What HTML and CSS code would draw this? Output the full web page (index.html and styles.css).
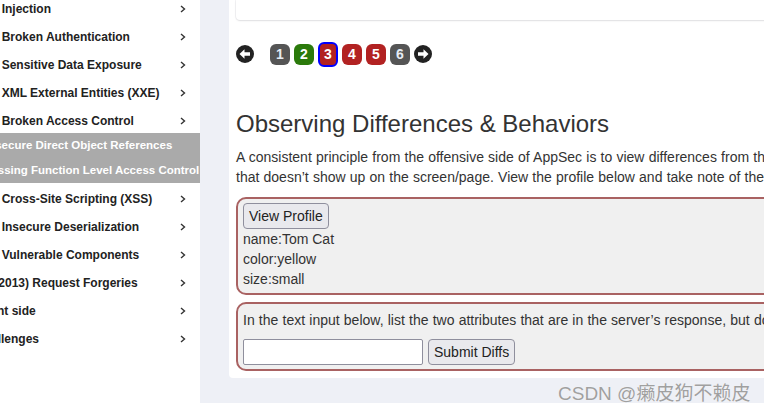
FILE: index.html
```html
<!DOCTYPE html>
<html lang="en">
<head>
<meta charset="utf-8">
<title>Observing Differences &amp; Behaviors</title>
<link rel="stylesheet" href="styles.css">
</head>
<body>
<div class="app">
  <nav class="sidebar">
    <ul class="menu">
      <li class="item"><span>(A1) Injection</span><svg class="chev" width="6" height="8" viewBox="0 0 6 8"><path d="M1 1 L4.5 4 L1 7" /></svg></li>
      <li class="item"><span>(A2) Broken Authentication</span><svg class="chev" width="6" height="8" viewBox="0 0 6 8"><path d="M1 1 L4.5 4 L1 7" /></svg></li>
      <li class="item"><span>(A3) Sensitive Data Exposure</span><svg class="chev" width="6" height="8" viewBox="0 0 6 8"><path d="M1 1 L4.5 4 L1 7" /></svg></li>
      <li class="item"><span>(A4) XML External Entities (XXE)</span><svg class="chev" width="6" height="8" viewBox="0 0 6 8"><path d="M1 1 L4.5 4 L1 7" /></svg></li>
      <li class="item"><span>(A5) Broken Access Control</span><svg class="chev" width="6" height="8" viewBox="0 0 6 8"><path d="M1 1 L4.5 4 L1 7" /></svg></li>
      <li class="sub">
        <span class="sub-item">Insecure Direct Object References</span>
        <span class="sub-item">Missing Function Level Access Control</span>
      </li>
      <li class="item"><span>(A7) Cross-Site Scripting (XSS)</span><svg class="chev" width="6" height="8" viewBox="0 0 6 8"><path d="M1 1 L4.5 4 L1 7" /></svg></li>
      <li class="item"><span>(A8) Insecure Deserialization</span><svg class="chev" width="6" height="8" viewBox="0 0 6 8"><path d="M1 1 L4.5 4 L1 7" /></svg></li>
      <li class="item"><span>(A9) Vulnerable Components</span><svg class="chev" width="6" height="8" viewBox="0 0 6 8"><path d="M1 1 L4.5 4 L1 7" /></svg></li>
      <li class="item"><span>(A8:2013) Request Forgeries</span><svg class="chev" width="6" height="8" viewBox="0 0 6 8"><path d="M1 1 L4.5 4 L1 7" /></svg></li>
      <li class="item"><span>Client side</span><svg class="chev" width="6" height="8" viewBox="0 0 6 8"><path d="M1 1 L4.5 4 L1 7" /></svg></li>
      <li class="item"><span>Challenges</span><svg class="chev" width="6" height="8" viewBox="0 0 6 8"><path d="M1 1 L4.5 4 L1 7" /></svg></li>
    </ul>
  </nav>
  <main class="main">
    <div class="panel">
      <div class="prev-card"></div>
      <div class="pager">
        <svg class="arrow arrow-prev" width="18" height="18" viewBox="0 0 18 18"><circle cx="9" cy="9" r="9" fill="#222"/><path d="M3.5 9 L8.5 4.2 L8.5 7.2 L14 7.2 L14 10.8 L8.5 10.8 L8.5 13.8 Z" fill="#fff"/></svg>
        <span class="page grey">1</span>
        <span class="page green">2</span>
        <span class="page red active">3</span>
        <span class="page red">4</span>
        <span class="page red">5</span>
        <span class="page grey">6</span>
        <svg class="arrow" width="18" height="18" viewBox="0 0 18 18"><circle cx="9" cy="9" r="9" fill="#222"/><path d="M14.5 9 L9.5 4.2 L9.5 7.2 L4 7.2 L4 10.8 L9.5 10.8 L9.5 13.8 Z" fill="#fff"/></svg>
      </div>
      <h2 class="title">Observing Differences &amp; Behaviors</h2>
      <p class="intro">A consistent principle from the offensive side of AppSec is to view differences from the raw response<br>that doesn’t show up on the screen/page. View the profile below and take note of the differences.</p>
      <div class="box">
        <button class="btn" type="button">View Profile</button>
        <div>name:Tom Cat</div>
        <div>color:yellow</div>
        <div>size:small</div>
      </div>
      <div class="box box-form">
        <div class="nowrap">In the text input below, list the two attributes that are in the server’s response, but don’t show in the profile.</div>
        <div class="form-row">
          <input class="field" type="text">
          <button class="btn" type="button">Submit Diffs</button>
        </div>
      </div>
    </div>
  </main>
</div>
<div class="watermark">CSDN @癞皮狗不赖皮</div>
</body>
</html>
```
FILE: styles.css
```css
html, body {
  margin: 0;
  padding: 0;
}

body {
  position: relative;
  width: 764px;
  height: 413px;
  overflow: hidden;
  background: #fff;
  font-family: "Liberation Sans", Arial, sans-serif;
  color: #333;
}

.app {
  display: flex;
  height: 403px;
  background: #eef0f6;
}

/* ---------- sidebar ---------- */
.sidebar {
  flex: 0 0 200px;
  background: #fff;
  overflow: hidden;
}

.menu {
  list-style: none;
  margin: -5px 0 0 -25px;
  padding: 0;
  width: 225px;
}

.item {
  display: flex;
  align-items: center;
  justify-content: space-between;
  height: 28px;
  padding-right: 14px;
  font-size: 12px;
  font-weight: bold;
  color: #222;
  white-space: nowrap;
}

.chev path {
  fill: none;
  stroke: #333;
  stroke-width: 1.4;
}

.sub {
  margin: -2px 0 2px;
  background: #aaa;
}

.sub-item {
  display: block;
  height: 25px;
  line-height: 25px;
  padding-left: 10px;
  font-size: 11.5px;
  font-weight: bold;
  color: #fff;
  white-space: nowrap;
}

/* ---------- main ---------- */
.main {
  flex: 0 0 800px;
  padding-left: 29px;
}

.panel {
  box-sizing: border-box;
  height: 378px;
  padding-left: 7px;
  background: #fff;
  border-radius: 0 0 0 4px;
  overflow: hidden;
}

.prev-card {
  height: 20px;
  background: #fff;
  border-radius: 0 0 4px 4px;
  box-shadow: 0 1px 2px rgba(0, 0, 0, 0.09), 0 0 0 1px #f4f4f6;
}

.pager {
  display: flex;
  align-items: center;
  gap: 4px;
  height: 24px;
  margin-top: 22px;
}

.arrow-prev {
  margin-right: 12px;
}

.page {
  box-sizing: border-box;
  display: flex;
  align-items: center;
  justify-content: center;
  width: 20px;
  height: 21px;
  border-radius: 6px;
  font-size: 14px;
  font-weight: bold;
  color: #fff;
}

.grey { background: #555; color: #e6ecf4; }
.green { background: #2b7a0b; }
.red { background: #b22222; }

.page.active {
  height: 25px;
  border: 2px solid #0000ff;
}

.title {
  margin: 44px 0 0;
  font-size: 24px;
  line-height: 28px;
  font-weight: normal;
  color: #333;
}

.intro {
  margin: 9px 0 0;
  font-size: 14px;
  line-height: 20px;
  word-spacing: 0.3px;
  white-space: nowrap;
}

.box {
  margin-top: 10px;
  padding: 4px 5px;
  border: 2px solid #a96262;
  border-radius: 10px;
  background: #f0f0f0;
  font-size: 14px;
  line-height: 20px;
  color: #333;
}

.box-form {
  margin-top: 7px;
  padding-top: 6px;
}

.nowrap {
  white-space: nowrap;
  word-spacing: 0.3px;
}

.btn {
  display: block;
  height: 26px;
  padding: 0 5px;
  font-family: "Liberation Sans", Arial, sans-serif;
  font-size: 14px;
  color: #222;
  background: #e9e9ed;
  border: 1px solid #8f8f9d;
  border-radius: 4px;
}

.form-row {
  display: flex;
  gap: 5px;
  margin-top: 9px;
}

.field {
  box-sizing: border-box;
  width: 180px;
  height: 26px;
  margin: 0;
  background: #fff;
  border: 1px solid #8f8f9d;
  border-radius: 2px;
}

.watermark {
  position: absolute;
  left: 558px;
  top: 383px;
  font-family: "Liberation Sans", "Noto Sans CJK SC", sans-serif;
  font-size: 19px;
  line-height: 22px;
  color: #a0a0a0;
  text-shadow: 0 0 1px #fff;
  white-space: nowrap;
}
```
